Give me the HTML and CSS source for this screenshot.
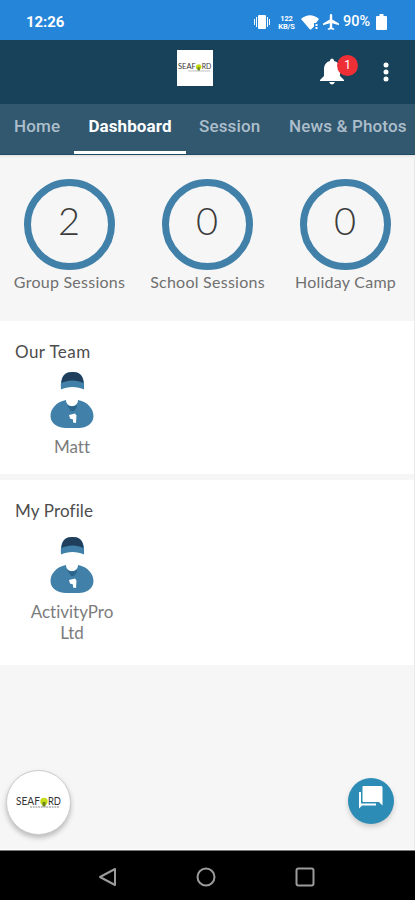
FILE: index.html
```html
<!DOCTYPE html>
<html lang="en">
<head>
<meta charset="utf-8">
<title>Dashboard</title>
<link rel="stylesheet" href="styles.css">
</head>
<body>
<svg width="0" height="0" class="defs">
  <defs>
    <symbol id="coach" viewBox="0 0 44 57">
      <path fill="#4080a9" d="M11 18.500C10 6 14 1 22.500 1S35 6 34 18.500c-6-3.500-17-3.500-23 0z"/>
      <path fill="#203f5c" d="M11.500 12C12 4 16 1 22.500 1s10.500 3 11 11c-6-3.500-16-3.500-22 0z"/>
      <path fill="#4080a9" d="M16 29C6 31 .5 38 .5 45c0 8 8 12 15.500 12h13c7 0 14.500-4 14.500-12 0-7-5.500-14-15.500-16 0 8-12 8-12 0z"/>
      <path fill="#2c658c" d="M17 34q5 3 10 0v2l-3 4h-3z"/>
      <path fill="#fff" d="M19 44l6-1.500 1.500 2-.5 7.500-3-.500v-3l-3-1z"/>
    </symbol>
    <symbol id="logo" viewBox="0 0 46 16">
      <text x="0" y="10" class="logo-text" textLength="24" lengthAdjust="spacingAndGlyphs">SEAF</text>
      <circle cx="28" cy="6.500" r="3.700" fill="#c5dc16"/>
      <path d="M26.500 7h3v4.500h-3z" fill="#69851b"/>
      <text x="32" y="10" class="logo-text" textLength="13" lengthAdjust="spacingAndGlyphs">RD</text>
      <path d="M14 12h29" stroke="#888" stroke-width="1" stroke-dasharray="2 .7"/>
    </symbol>
  </defs>
</svg>
<div class="app">
  <header class="status">
    <span class="time">12:26</span>
    <div class="indicators">
      <svg class="vibrate" width="16" height="14" viewBox="0 0 16 14" fill="#fff"><rect x="4" y="0" width="8" height="14" rx="1"/><path d="M2 2h1v10H2zM0 4h1v6H0zM13 2h1v10h-1zM15 4h1v6h-1z"/></svg>
      <span class="speed"><span>122</span><span>KB/S</span></span>
      <svg class="wifi" width="18" height="15" viewBox="0 0 18 15" fill="#fff"><path d="M0 4Q9-3.500 18 4l-3 4h-2v3.500L10 14.500H9z"/><path d="M14.500 9h2v2h-2zm0 3h2v2h-2z"/></svg>
      <svg class="plane" width="16" height="16" viewBox="2 2 20 20" fill="#fff"><path d="M22 16v-2l-8.500-5V3.500a1.500 1.500 0 0 0-3 0V9L2 14v2l8.500-2.500V19L8 20.500V22l4-1 4 1v-1.500L13.500 19v-5.500z"/></svg>
      <span class="percent">90%</span>
      <svg class="battery" width="11" height="16" viewBox="0 0 11 16" fill="#fff"><path d="M3.500 0h4v2H10q1 0 1 1v12q0 1-1 1H1q-1 0-1-1V3q0-1 1-1h2.500z"/></svg>
    </div>
  </header>
  <div class="toolbar">
    <div class="brand"><svg width="34" height="12"><use href="#logo"/></svg></div>
    <div class="bell">
      <svg width="24" height="28" viewBox="0 0 24 28" fill="#fff"><path d="M10 3V2q2-3 4 0v1c4 1 6 4 6 8v7l4 4v1H0v-1l4-4v-7c0-4 2-7 6-8zM9 24h6q-3 5-6 0z"/></svg>
      <span class="badge">1</span>
    </div>
    <svg class="more" width="6" height="20" viewBox="0 0 6 20" fill="#fff"><circle cx="3" cy="3" r="2.500"/><circle cx="3" cy="10" r="2.500"/><circle cx="3" cy="17" r="2.500"/></svg>
  </div>
  <nav class="tabs">
    <a class="tab home">Home</a>
    <a class="tab active">Dashboard</a>
    <a class="tab session">Session</a>
    <a class="tab news">News &amp; Photos</a>
  </nav>
  <main>
    <section class="stats">
      <div class="stat"><div class="ring">2</div><span class="label">Group Sessions</span></div>
      <div class="stat"><div class="ring">0</div><span class="label">School Sessions</span></div>
      <div class="stat"><div class="ring">0</div><span class="label">Holiday Camp</span></div>
    </section>
    <section class="panel team">
      <h2>Our Team</h2>
      <div class="person"><svg width="44" height="57"><use href="#coach"/></svg><span>Matt</span></div>
    </section>
    <section class="panel profile">
      <h2>My Profile</h2>
      <div class="person"><svg width="44" height="57"><use href="#coach"/></svg><span>ActivityPro<br>Ltd</span></div>
    </section>
    <div class="actions">
      <div class="club"><svg width="46" height="16"><use href="#logo"/></svg></div>
      <div class="chat"><svg width="26" height="25" viewBox="0 0 26 25" fill="#fff"><path d="M5.500 0H23q1.500 0 1.500 1.500V19.500L21 16H5.500q-1 0-1-1V1q0-1 1-1z"/><path d="M1 6h2v11.500h15v2H4l-3 3z"/></svg></div>
    </div>
  </main>
  <footer class="navbar">
    <svg width="20" height="20" viewBox="0 0 20 20"><path d="M18 2v16L3 10z"/></svg>
    <svg width="20" height="20" viewBox="0 0 20 20"><circle cx="10" cy="10" r="8.500"/></svg>
    <svg width="20" height="20" viewBox="0 0 20 20"><rect x="1.500" y="1.500" width="17" height="17" rx="2"/></svg>
  </footer>
</div>
</body>
</html>
```

FILE: styles.css
```css
* { box-sizing: border-box; }
body { margin: 0; background: #f6f6f6; font-family: Lato, "Liberation Sans", sans-serif; font-variant-ligatures: none; }
.defs { position: absolute; }
.app { width: 415px; height: 900px; display: flex; flex-direction: column; overflow: hidden; }
svg { display: block; flex: none; }

.status { height: 40px; flex: none; background: #2585d9; color: #fff; display: flex; align-items: center; justify-content: space-between; padding: 4px 28px 0 26px; font-family: Roboto, sans-serif; }
.time { font-size: 15px; font-weight: 700; line-height: 18px; letter-spacing: -.1px; }
.indicators { display: flex; align-items: center; }
.speed { width: 17px; margin-left: 8px; display: flex; flex-direction: column; align-items: center; gap: 1px; font-size: 7.500px; line-height: 7px; font-weight: 700; letter-spacing: -.1px; white-space: nowrap; }
.wifi { margin-left: 6px; }
.plane { margin-left: 4px; }
.percent { width: 28px; margin: 0 5px 0 4px; font-size: 14.500px; font-weight: 500; line-height: 18px; }

.toolbar { height: 64px; flex: none; background: #184259; display: flex; align-items: flex-start; padding-left: 177px; }
.brand { width: 36px; height: 36px; margin-top: 10px; background: #fff; display: flex; align-items: center; justify-content: center; }
.logo-text { font: 400 11px Lato, sans-serif; fill: #343434; }
.bell { position: relative; margin: 18px 0 0 107px; }
.badge { position: absolute; left: 17px; top: -3px; width: 21px; height: 21px; border-radius: 50%; background: #ee3036; color: #fff; font: 12px/20px Roboto, sans-serif; text-align: center; }
.more { margin: 22px 0 0 39px; }

.tabs { height: 51px; flex: none; background: #31586f; display: flex; border-bottom: 1px solid #204c63; font: 500 17px/45px Roboto, sans-serif; color: #adbecb; letter-spacing: .15px; white-space: nowrap; }
.tab { height: 51px; }
.home { width: 74px; padding-left: 14px; }
.active { width: 112px; height: 50px; color: #fff; border-bottom: 3px solid #fff; text-align: center; font-weight: 700; letter-spacing: .1px; }
.session { padding-left: 13px; width: 103px; }

main { flex: 1; display: flex; flex-direction: column; background: #f6f6f6; border-right: 1px solid #e9e9e9; border-bottom: 1px solid #fff; }
.stats { height: 166px; flex: none; display: grid; grid-template-columns: repeat(3, 138px); padding: 24px 0 0; box-shadow: inset 0 3px 3px -2px #ddd; }
.stat { display: flex; flex-direction: column; align-items: center; color: #707070; }
.ring { width: 91px; height: 91px; border: 7px solid #4080a9; border-radius: 50%; text-align: center; font-size: 38px; line-height: 68px; font-weight: 300; color: #3c3c3c; }
.label { font-size: 16px; line-height: 20px; margin-top: 2px; padding-left: 1px; white-space: nowrap; letter-spacing: .25px; }

.panel { background: #fff; flex: none; padding-left: 15px; }
.team { height: 153px; padding-top: 20px; }
.profile { height: 185px; margin-top: 6px; padding-top: 20px; }
h2 { margin: 0; font-size: 17px; line-height: 22px; font-weight: 400; color: #4d4d4d; letter-spacing: .15px; }
.team h2 { letter-spacing: .45px; }
.person { width: 114px; display: flex; flex-direction: column; align-items: center; margin-top: 8px; text-align: center; color: #7c7c7c; font-size: 17px; line-height: 21px; letter-spacing: 0; }
.person span { margin-top: 8px; }
.profile .person { margin-top: 14px; }

.actions { display: flex; justify-content: space-between; align-items: flex-start; padding: 105px 20px 0 6px; }
.club { width: 65px; height: 65px; border: 1px solid #ccc; border-radius: 50%; background: #fff; box-shadow: 0 3px 5px #bbb; display: flex; align-items: center; justify-content: center; }
.chat { width: 46px; height: 46px; margin-top: 8px; border-radius: 50%; background: #2d8cb5; box-shadow: 0 3px 5px #ccc; display: flex; justify-content: center; padding-top: 8px; }

.navbar { height: 50px; flex: none; background: #000; border-top: 1px solid #777; display: flex; align-items: center; padding: 2px 0 0 97px; gap: 79px; }
.navbar svg { fill: none; stroke: #9b9b9b; stroke-width: 2; stroke-linejoin: round; }
```
